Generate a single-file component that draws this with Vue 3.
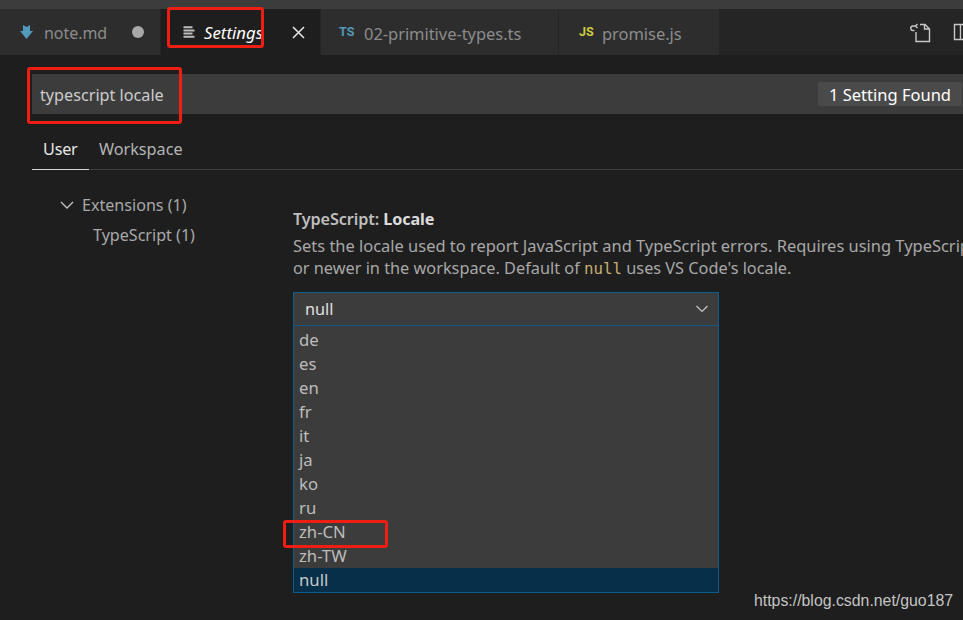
<script setup>
const options = ['de', 'es', 'en', 'fr', 'it', 'ja', 'ko', 'ru', 'zh-CN', 'zh-TW']
</script>

<template>
  <div class="page">
    <div class="titlestrip"></div>
    <div class="tabbar">
      <div class="tab t1">
        <svg class="fileicon" width="13" height="14" viewBox="0 0 13 14"><path d="M3 0 L6.500 2 L10 0 V6 H13 L6.500 14 L0 6 H3 Z" fill="#519aba"/></svg>
        <span class="tabname">note.md</span>
        <span class="dot"></span>
      </div>
      <div class="tab t2">
        <svg class="lines" width="12" height="12" viewBox="0 0 12 12"><path d="M0.500 1.200H9.500M0.500 4.400H11.500M0.500 7.600H9.500M0.500 10.800H11.500" stroke="#bdbdbd" stroke-width="2"/></svg>
        <span class="tabname active">Settings</span>
        <svg class="close" width="13" height="13" viewBox="0 0 13 13"><path d="M1 1L12 12M12 1L1 12" stroke="#e8e8e8" stroke-width="1.500"/></svg>
      </div>
      <div class="tab t3">
        <span class="badge ts">TS</span>
        <span class="tabname">02-primitive-types.ts</span>
      </div>
      <div class="tab t4">
        <span class="badge js">JS</span>
        <span class="tabname">promise.js</span>
      </div>
      <div class="actions">
        <svg width="22" height="22" viewBox="0 0 22 22" fill="none" stroke="#c8c8c8" stroke-width="1.400"><path d="M7 11V20.500H20.500V8L16 3.500H11M15.500 3.500V8H20.500"/><path d="M7 5H4A2.200 2.200 0 0 0 4 9.500H5.500M8.500 3L6.500 5L8.500 7"/></svg>
        <svg width="14" height="22" viewBox="0 0 14 22" fill="none" stroke="#c8c8c8" stroke-width="1.400"><path d="M14 3.500H1.500V18.500H14M7.500 3.500V18.500"/></svg>
      </div>
    </div>

    <div class="searchwrap">
      <div class="search">
        <span class="query">typescript locale</span>
        <span class="found">1 Setting Found</span>
      </div>
    </div>

    <div class="scopes">
      <span class="scope on">User</span>
      <span class="scope">Workspace</span>
    </div>

    <div class="content">
      <div class="tree">
        <div class="node">
          <svg width="16" height="16" viewBox="0 0 16 16" fill="none" stroke="#c5c5c5" stroke-width="1.300"><path d="M2 5L8 11L14 5"/></svg>
          <span>Extensions (1)</span>
        </div>
        <div class="leaf">TypeScript (1)</div>
      </div>
      <div class="setting">
        <div class="title">TypeScript: <b>Locale</b></div>
        <div class="desc">
          <div class="line1">Sets the locale used to report JavaScript and TypeScript errors. Requires using TypeScript 2.6.0</div>
          <div class="line2">or newer in the workspace. Default of <code>null</code> uses VS Code's locale.</div>
        </div>
        <div class="select">
          <div class="current">
            <span>null</span>
            <svg width="14" height="14" viewBox="0 0 14 14" fill="none" stroke="#c5c5c5" stroke-width="1.200"><path d="M1.500 4L7 9.500L12.500 4"/></svg>
          </div>
          <div class="list">
            <div v-for="o in options" :key="o" class="opt">{{ o }}</div>
            <div class="opt sel">null</div>
          </div>
        </div>
      </div>
    </div>

    <div class="mark">https://blog.csdn.net/guo187</div>

    <div class="red r1"></div>
    <div class="red r2"></div>
    <div class="red r3"></div>
  </div>
</template>

<style>
html, body { margin: 0; background: #1e1e1e; overflow: hidden; }
</style>

<style scoped>
.page {
  position: relative;
  width: 963px;
  height: 620px;
  overflow: hidden;
  background: #1e1e1e;
  color: #ccc;
  font-family: "Noto Sans", "Open Sans", sans-serif;
  font-size: 16px;
}
.titlestrip { height: 9px; background: #3c3c3c; }
.tabbar { display: flex; height: 46px; background: #252526; }
.tab { display: flex; align-items: center; background: #2d2d2d; box-sizing: border-box; flex: none; border-right: 1px solid #252526; }
.t1 { width: 161px; padding: 0 15px 0 20px; }
.t2 { width: 160px; padding: 0 15px 0 22px; background: #1e1e1e; }
.t3 { width: 238px; padding-left: 18px; }
.t4 { width: 160px; padding-left: 20px; border-right: none; }
.fileicon { margin-right: 11px; }
.tabname { color: #8c8c8c; font-size: 16px; letter-spacing: -0.050px; position: relative; top: 1px; }
.tabname.active { color: #fff; font-style: italic; font-size: 16.800px; letter-spacing: 0; top: 0; }
.lines { margin-right: 9px; }
.t2 .close { margin-left: auto; }
.dot { width: 12px; height: 12px; border-radius: 50%; background: #a8a8a8; margin-left: auto; margin-right: 1px; }
.badge { font-family: "Roboto", sans-serif; font-weight: 700; font-size: 12.500px; width: 16px; position: relative; top: -1px; }
.ts { color: #519aba; margin-right: 9px; }
.js { color: #cbcb41; margin-right: 7px; }
.t3 .tabname, .t4 .tabname { font-size: 16.500px; }
.actions { margin-left: auto; display: flex; align-items: center; gap: 22px; margin-right: -4px; }

.searchwrap { padding: 19px 0 0 32px; }
.search {
  height: 40px;
  background: #3c3c3c;
  display: flex;
  align-items: center;
  justify-content: space-between;
  padding: 0 1px 0 8px;
}
.query { color: #cccccc; font-size: 16.200px; padding-top: 2px; }
.found { color: #fff; font-size: 16.500px; height: 24px; line-height: 26px; padding: 0 11px 0 11px; border-radius: 2px; background: #4a4a4a; }

.scopes { margin: 19px 0 0 32px; height: 37px; display: flex; border-bottom: 1px solid #3e3e3e; box-sizing: border-box; }
.scope { color: #b5b5b5; line-height: 32px; font-size: 16.200px; }
.scope.on { color: #e7e7e7; padding-left: 11px; margin-right: 10px; width: 57px; box-sizing: border-box; border-bottom: 1px solid #d8d8d8; height: 37px; letter-spacing: -0.200px; }

.content { display: flex; }
.tree { width: 293px; flex: none; padding: 20px 0 0 59px; box-sizing: border-box; color: #a9a9a9; font-size: 16.100px; line-height: 30px; }
.node { display: flex; align-items: center; gap: 7px; }
.leaf { padding-left: 34px; }

.setting { padding-top: 36px; width: 670px; flex: none; overflow: hidden; }
.title { color: #bfbfbf; font-size: 16.200px; line-height: 26px; margin-bottom: 2px; font-weight: 600; letter-spacing: -0.100px; }
.title b { color: #dcdcdc; font-weight: 700; }
.desc { color: #a8a8a8; line-height: 23px; white-space: nowrap; }
.line1 { font-size: 16.450px; }
.line2 { font-size: 16.300px; }
code { font-family: "DejaVu Sans Mono", "Liberation Mono", monospace; color: #c6ae72; font-size: 15.800px; }

.select { margin-top: 12px; width: 426px; box-sizing: border-box; border: 1px solid #0e5c8f; background: #3c3c3c; }
.current { height: 32px; display: flex; align-items: center; justify-content: space-between; padding: 0 9px 0 11px; color: #e0e0e0; font-size: 16.300px; border-bottom: 1px solid #155580; }
.list { padding-top: 2px; }
.opt { height: 24px; line-height: 24px; padding-left: 5px; color: #bdbdbd; font-size: 16.700px; }
.sel { background: #062f4a; color: #c8c8c8; }

.mark { position: absolute; left: 754px; top: 592px; font-family: "Liberation Sans", sans-serif; font-size: 15.850px; color: #c4c4c4; }

.red { position: absolute; border: 3px solid #f01e12; border-radius: 3px; box-sizing: border-box; }
.r1 { left: 167px; top: 7px; width: 97px; height: 41px; }
.r2 { left: 27px; top: 67px; width: 155px; height: 57px; }
.r3 { left: 283px; top: 520px; width: 105px; height: 28px; }
</style>
